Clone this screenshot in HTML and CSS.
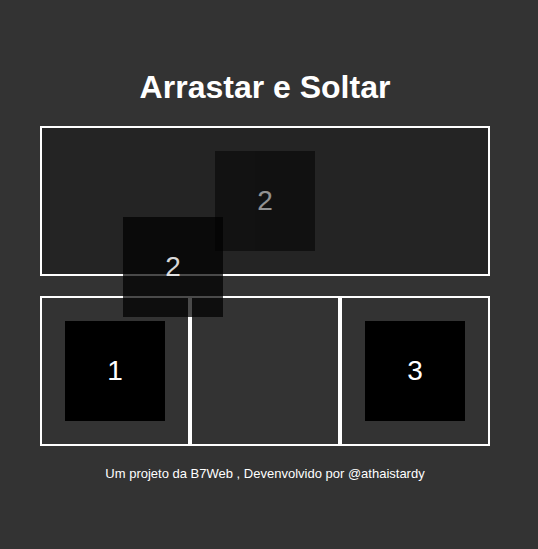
FILE: index.html
```html
<!DOCTYPE html>
<html lang="pt-BR">
<head>
<meta charset="utf-8">
<title>Arrastar e Soltar</title>
<link rel="stylesheet" href="styles.css">
</head>
<body>
  <div class="container">
    <h1 class="title">Arrastar e Soltar</h1>
    <div class="neutral-area area">
      <div class="item dragging">2</div>
    </div>
    <div class="areas">
      <div class="area"><div class="item">1</div></div>
      <div class="area"></div>
      <div class="area"><div class="item">3</div></div>
    </div>
    <p class="footer">Um projeto da B7Web , Devenvolvido por @athaistardy</p>
  </div>
  <div class="item ghost">2</div>
</body>
</html>
```
FILE: styles.css
```css
html, body {
  margin: 0;
  padding: 0;
  background: #333333;
  font-family: "Liberation Sans", Arial, sans-serif;
  color: #ffffff;
}
.container {
  width: 450px;
  margin: 0 0 0 40px;
  padding-top: 1px;
}
.title {
  margin: 68px 0 20px;
  font-size: 32px;
  line-height: 37px;
  font-weight: bold;
  text-align: center;
}
.area {
  box-sizing: border-box;
  border: 2px solid #ffffff;
  display: flex;
  align-items: center;
  justify-content: center;
  height: 150px;
}
.neutral-area {
  width: 450px;
  background: #242424;
}
.areas {
  display: flex;
  margin-top: 20px;
}
.areas .area {
  width: 150px;
}
.item {
  width: 100px;
  height: 100px;
  background: #000000;
  color: #ffffff;
  font-size: 28px;
  display: flex;
  align-items: center;
  justify-content: center;
}
.dragging {
  opacity: 0.5;
}
.ghost {
  position: absolute;
  left: 123px;
  top: 217px;
  background: rgba(0, 0, 0, 0.71);
  color: rgba(255, 255, 255, 0.85);
}
.footer {
  margin: 20px 0 0;
  font-size: 13px;
  line-height: 15px;
  text-align: center;
}
```
